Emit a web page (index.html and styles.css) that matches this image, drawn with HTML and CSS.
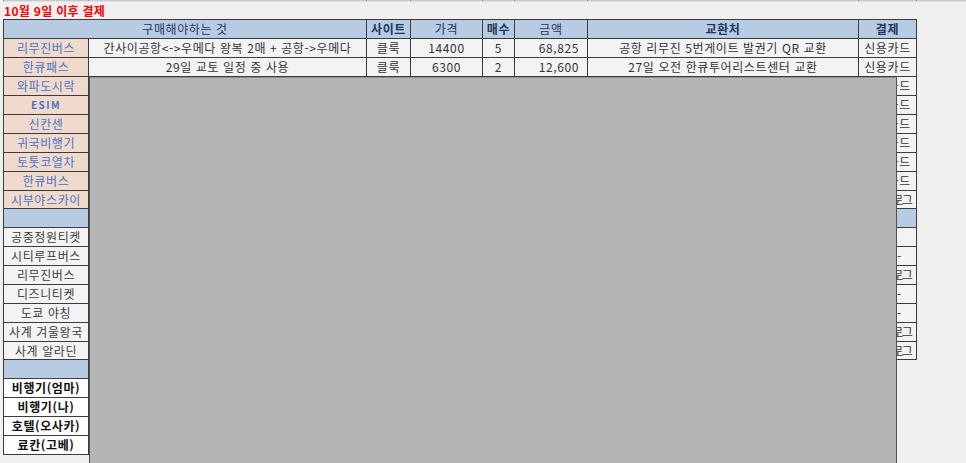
FILE: index.html
```html
<!DOCTYPE html>
<html lang="ko">
<head>
<meta charset="utf-8">
<title>10월 9일 이후 결제</title>
<link rel="stylesheet" href="styles.css">
</head>
<body>
<div class="stub">
  <span></span><span></span><span></span><span></span><span></span><span></span><span></span><span></span>
</div>
<div class="title">10월 9일 이후 결제</div>
<div class="sheet">
  <div class="c hd span2">구매해야하는 것</div>
  <div class="c hd b">사이트</div>
  <div class="c hd">가격</div>
  <div class="c hd b">매수</div>
  <div class="c hd">금액</div>
  <div class="c hd b">교환처</div>
  <div class="c hd b">결제</div>

  <div class="c nm">리무진버스</div>
  <div class="c d">간사이공항&lt;-&gt;우메다 왕복 2매 + 공항-&gt;우메다</div>
  <div class="c d">클룩</div>
  <div class="c d">14400</div>
  <div class="c d">5</div>
  <div class="c d r">68,825</div>
  <div class="c d">공항 리무진 5번게이트 발권기 QR 교환</div>
  <div class="c d">신용카드</div>

  <div class="c nm">한큐패스</div>
  <div class="c d">29일 교토 일정 중 사용</div>
  <div class="c d">클룩</div>
  <div class="c d">6300</div>
  <div class="c d">2</div>
  <div class="c d r">12,600</div>
  <div class="c d">27일 오전 한큐투어리스트센터 교환</div>
  <div class="c d">신용카드</div>

  <div class="c nm">와파도시락</div><div class="c d span6"></div><div class="c d">신용카드</div>
  <div class="c nm esim">ESIM</div><div class="c d span6"></div><div class="c d">신용카드</div>
  <div class="c nm">신칸센</div><div class="c d span6"></div><div class="c d">신용카드</div>
  <div class="c nm">귀국비행기</div><div class="c d span6"></div><div class="c d">신용카드</div>
  <div class="c nm">토톳코열차</div><div class="c d span6"></div><div class="c d">신용카드</div>
  <div class="c nm">한큐버스</div><div class="c d span6"></div><div class="c d">신용카드</div>
  <div class="c nm">시부야스카이</div><div class="c d span6"></div><div class="c d tight">트래블로그</div>

  <div class="c blue"></div><div class="c blue span6"></div><div class="c blue"></div>

  <div class="c gr">공중정원티켓</div><div class="c d span6"></div><div class="c d"></div>
  <div class="c gr">시티루프버스</div><div class="c d span6"></div><div class="c d dash">-</div>
  <div class="c gr">리무진버스</div><div class="c d span6"></div><div class="c d tight">트래블로그</div>
  <div class="c gr">디즈니티켓</div><div class="c d span6"></div><div class="c d dash">-</div>
  <div class="c gr">도쿄 야칭</div><div class="c d span6"></div><div class="c d dash">-</div>
  <div class="c gr">사계 겨울왕국</div><div class="c d span6"></div><div class="c d tight">트래블로그</div>
  <div class="c gr">사계 알라딘</div><div class="c d span6"></div><div class="c d tight">트래블로그</div>

  <div class="c blue col1"></div>
  <div class="c bk col1">비행기(엄마)</div>
  <div class="c bk col1">비행기(나)</div>
  <div class="c bk col1">호텔(오사카)</div>
  <div class="c bk col1">료칸(고베)</div>
</div>
<div class="cover"></div>
</body>
</html>
```

FILE: styles.css
```css
html, body {
  margin: 0;
  padding: 0;
}
body {
  background: #f0f0f0;
  font-family: "Noto Sans CJK KR", "Noto Sans", sans-serif;
  font-size: 12px;
  color: #333;
  width: 966px;
  height: 463px;
  overflow: hidden;
  position: relative;
}
.stub {
  display: grid;
  grid-template-columns: 85px 278px 44px 72px 32px 73px 271px 58px;
  margin-left: 3px;
  height: 1px;
  border-left: 1px solid #a0a0a0;
  border-bottom: 1px solid #e2e2e2;
  background: #c9c9c9;
}
.stub span {
  border-right: 1px solid #8a8a8a;
}
.title {
  height: 17px;
  line-height: 17px;
  padding-left: 4px;
  color: #ff0000;
  font-weight: bold;
  font-size: 12px;
  letter-spacing: 0.3px;
}
.sheet {
  display: grid;
  grid-template-columns: 85px 278px 44px 72px 32px 73px 271px 58px;
  grid-template-rows: repeat(9, 19px) 18px repeat(7, 19px) 18px repeat(5, 19px);
  width: 913px;
  margin-left: 3px;
  border-top: 1px solid #3c3c3c;
  border-left: 1px solid #3c3c3c;
}
.c {
  border-right: 1px solid #3c3c3c;
  border-bottom: 1px solid #3c3c3c;
  text-align: center;
  white-space: nowrap;
  overflow: hidden;
  display: flex;
  align-items: center;
  justify-content: center;
  line-height: 1;
  letter-spacing: 0.6px;
}
.span2 { grid-column: span 2; }
.span6 { grid-column: span 6; }
.col1 { grid-column: 1; }
.hd {
  background: #b7cce3;
  color: #1f3560;
}
.hd.b { font-weight: bold; }
.nm {
  background: #f0dacd;
  color: #4a74c4;
}
.esim {
  letter-spacing: 1.5px;
  font-size: 10px;
  font-weight: 600;
}
.d {
  background: #f3f3f3;
  color: #333;
}
.r {
  justify-content: flex-end;
  padding-right: 8px;
}
.tight {
  letter-spacing: -1.5px;
}
.dash {
  justify-content: flex-start;
  padding-left: 38px;
}
.blue {
  background: #b7cce3;
}
.gr {
  background: #f3f3f3;
  color: #3c3c3c;
}
.bk {
  background: #fdfdfd;
  color: #111;
  font-weight: bold;
}
.cover {
  position: absolute;
  left: 89px;
  top: 77px;
  width: 808px;
  height: 386px;
  box-sizing: border-box;
  background: #b5b5b5;
  border-left: 1px solid #505050;
  border-right: 1px solid #505050;
  border-top: 1px solid #8e8e8e;
}
```
